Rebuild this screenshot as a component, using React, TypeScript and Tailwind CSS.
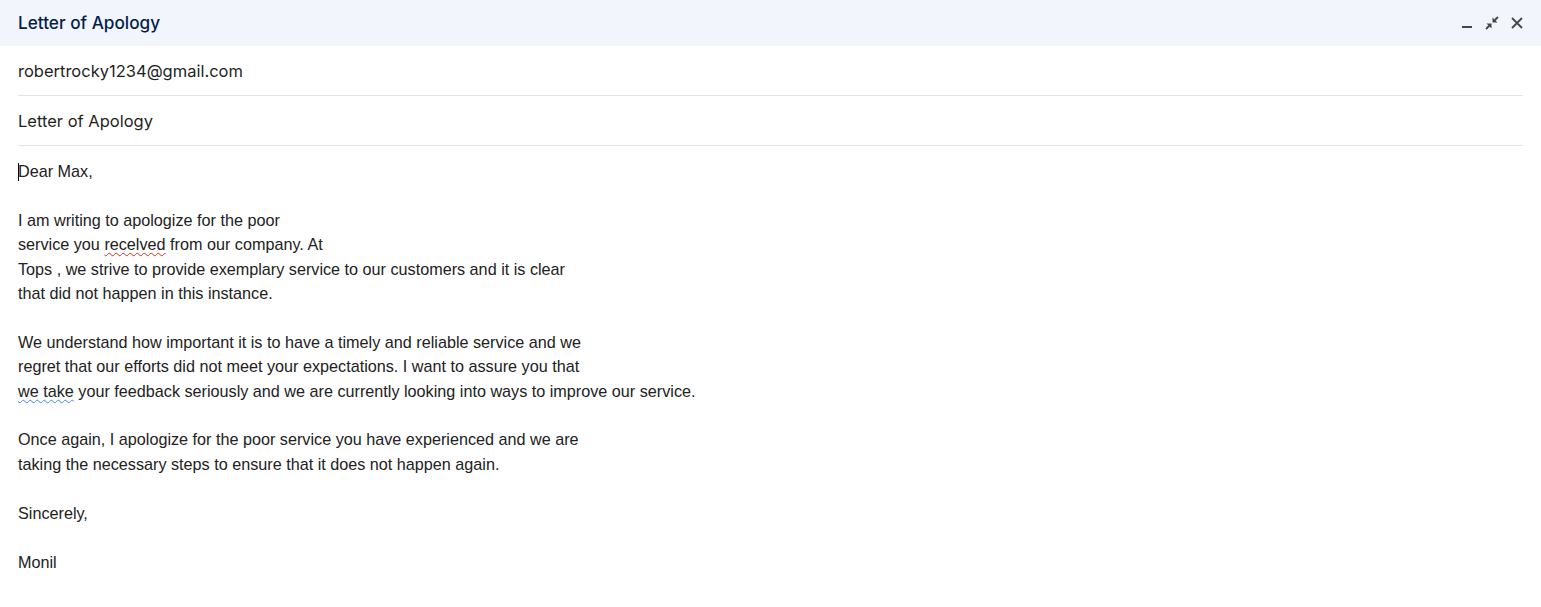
import React from "react";

function Minimize() {
  return (
    <svg width="20" height="20" viewBox="0 0 20 20" fill="#444746">
      <rect x="5" y="13" width="10" height="2" />
    </svg>
  );
}

function Collapse() {
  return (
    <svg width="20" height="20" viewBox="0 0 20 20" fill="none" stroke="#444746" strokeWidth="1.8">
      <path d="M16 4l-4.5 4.5" />
      <path d="M4 16l4.5-4.5" />
      <path d="M10.5 4.5v5h5z" fill="#444746" stroke="none" />
      <path d="M9.5 15.5v-5h-5z" fill="#444746" stroke="none" />
    </svg>
  );
}

function Close() {
  return (
    <svg width="20" height="20" viewBox="0 0 20 20" fill="none" stroke="#444746" strokeWidth="1.8">
      <path d="M5 5l10 10M15 5L5 15" />
    </svg>
  );
}

export default function App() {
  const body = "font-['Liberation_Sans',Arial,sans-serif] text-[16.2px] leading-[24.4px] text-[#222]";
  return (
    <div className="w-[1541px] h-[607px] bg-white overflow-hidden">
      <div className="h-[46px] bg-[#f2f6fc] flex items-center justify-between pl-[18px] pr-[14px]">
        <span className="font-['Inter',sans-serif] text-[17.2px] font-medium text-[#041e49]">Letter of Apology</span>
        <div className="flex items-center gap-[5px]">
          <Minimize />
          <Collapse />
          <Close />
        </div>
      </div>
      <div className="px-[18px] font-['Inter',sans-serif] text-[16.5px] text-[#1f1f1f]">
        <div className="h-[50px] pt-[2px] flex items-center border-b border-[#e3e3e3]">robertrocky1234@gmail.com</div>
        <div className="h-[50px] pt-[2px] flex items-center border-b border-[#e3e3e3]">Letter of Apology</div>
      </div>
      <div className={`px-[18px] pt-[13px] ${body}`}>
        <div className="relative">
          <span className="absolute left-0 top-[4px] w-px h-[18px] bg-black" />
          Dear Max,
        </div>
        <div>&nbsp;</div>
        <div>I am writing to apologize for the poor</div>
        <div>
          service you <span className="underline decoration-wavy decoration-[#d93025] decoration-1 underline-offset-2">recelved</span> from our company. At
        </div>
        <div>Tops , we strive to provide exemplary service to our customers and it is clear</div>
        <div>that did not happen in this instance.</div>
        <div>&nbsp;</div>
        <div>We understand how important it is to have a timely and reliable service and we</div>
        <div>regret that our efforts did not meet your expectations. I want to assure you that</div>
        <div>
          <span className="underline decoration-wavy decoration-[#4285f4] decoration-1 underline-offset-2">we take</span> your feedback seriously and we are currently looking into ways to improve our service.
        </div>
        <div>&nbsp;</div>
        <div>Once again, I apologize for the poor service you have experienced and we are</div>
        <div>taking the necessary steps to ensure that it does not happen again.</div>
        <div>&nbsp;</div>
        <div>Sincerely,</div>
        <div>&nbsp;</div>
        <div>Monil</div>
      </div>
    </div>
  );
}
